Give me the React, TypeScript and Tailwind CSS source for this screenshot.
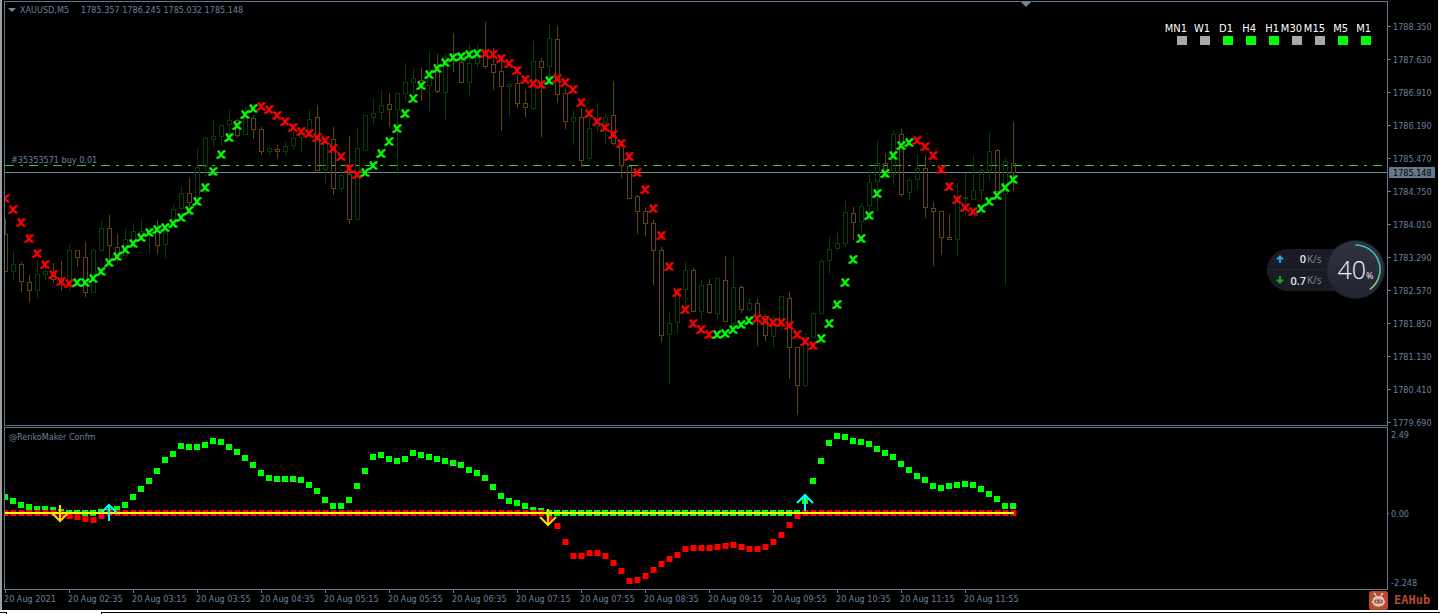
import clsx from "clsx";

type Candle = [up: number, high: number, top: number, bottom: number, low: number];

const STEP = 8;
const FIRST_X = 5;

// one row per bar: direction, high, body top, body bottom, low
const candles: Candle[] = [
  [0, 219, 234, 271, 271], [1, 251, 264, 271, 280], [0, 262, 264, 281, 291], [0, 275, 282, 290, 301],
  [1, 260, 274, 290, 297], [1, 267, 271, 274, 279], [0, 263, 272, 279, 282], [0, 261, 278, 281, 290],
  [1, 245, 250, 283, 290], [0, 250, 250, 257, 266], [0, 242, 257, 292, 296], [1, 248, 250, 292, 292],
  [1, 220, 228, 250, 251], [0, 215, 228, 245, 261], [0, 234, 247, 256, 261], [1, 229, 239, 255, 258],
  [1, 223, 231, 244, 245], [1, 219, 231, 236, 238], [1, 227, 230, 234, 253], [0, 220, 228, 245, 253],
  [1, 226, 228, 244, 257], [1, 205, 209, 227, 227], [1, 186, 193, 208, 209], [0, 178, 193, 202, 206],
  [1, 149, 167, 201, 205], [1, 137, 138, 166, 175], [1, 119, 136, 139, 147], [1, 124, 125, 136, 145],
  [1, 110, 120, 124, 131], [0, 119, 120, 135, 137], [1, 106, 115, 134, 134], [0, 115, 118, 129, 138],
  [0, 127, 129, 151, 154], [1, 145, 148, 151, 154], [0, 145, 149, 151, 158], [1, 142, 146, 151, 155],
  [1, 131, 138, 145, 149], [1, 130, 134, 137, 152], [1, 110, 119, 134, 137], [0, 105, 117, 170, 170],
  [1, 139, 140, 169, 182], [0, 127, 139, 188, 194], [1, 169, 175, 188, 191], [0, 136, 174, 219, 223],
  [1, 128, 148, 219, 219], [1, 115, 115, 150, 150], [1, 98, 113, 117, 124], [1, 90, 105, 112, 119],
  [0, 93, 104, 109, 126], [1, 93, 93, 109, 174], [1, 63, 82, 93, 100], [1, 69, 78, 82, 93],
  [0, 68, 80, 85, 100], [1, 51, 70, 85, 110], [0, 54, 68, 91, 92], [1, 54, 57, 92, 119],
  [0, 33, 58, 60, 71], [0, 57, 62, 82, 82], [1, 43, 63, 82, 96], [1, 44, 57, 63, 68],
  [0, 22, 52, 66, 68], [0, 48, 64, 72, 89], [0, 60, 71, 86, 130], [1, 83, 84, 86, 116],
  [0, 74, 83, 103, 107], [0, 89, 103, 107, 116], [1, 41, 61, 108, 109], [0, 58, 61, 67, 136],
  [1, 24, 38, 66, 76], [0, 26, 39, 94, 102], [0, 89, 93, 121, 128], [1, 110, 117, 121, 144],
  [0, 108, 117, 160, 166], [1, 107, 128, 158, 160], [1, 103, 120, 126, 132], [1, 114, 117, 122, 142],
  [0, 81, 115, 143, 144], [0, 143, 144, 165, 177], [0, 166, 166, 198, 198], [0, 195, 196, 211, 233],
  [0, 208, 211, 223, 235], [0, 220, 223, 250, 284], [0, 247, 250, 335, 341], [1, 312, 323, 334, 383],
  [1, 287, 292, 322, 333], [1, 262, 270, 289, 307], [0, 268, 270, 311, 311], [1, 279, 285, 311, 318],
  [0, 279, 284, 312, 313], [1, 278, 278, 313, 318], [0, 256, 280, 321, 321], [1, 257, 287, 323, 329],
  [0, 285, 287, 309, 312], [1, 298, 303, 309, 311], [0, 299, 303, 316, 345], [0, 314, 316, 335, 340],
  [1, 316, 318, 336, 347], [1, 296, 296, 326, 329], [0, 292, 298, 347, 378], [0, 347, 347, 385, 414],
  [1, 333, 337, 385, 386], [1, 311, 313, 337, 337], [1, 259, 261, 313, 313], [1, 237, 249, 260, 273],
  [1, 233, 243, 248, 251], [1, 201, 212, 243, 246], [0, 207, 213, 222, 239], [1, 203, 206, 221, 230],
  [1, 170, 182, 205, 215], [1, 140, 163, 181, 211], [0, 153, 163, 176, 177], [1, 130, 134, 174, 183],
  [0, 129, 134, 194, 196], [1, 178, 180, 192, 199], [1, 154, 168, 179, 189], [0, 155, 168, 207, 217],
  [0, 202, 208, 211, 265], [0, 211, 211, 237, 254], [0, 214, 237, 239, 239], [1, 183, 198, 239, 255],
  [1, 173, 197, 198, 216], [1, 155, 190, 199, 199], [1, 169, 170, 190, 199], [1, 133, 151, 170, 180],
  [0, 149, 150, 191, 191], [1, 158, 161, 194, 284], [0, 122, 163, 172, 190],
];

const trend = [
  198, 209, 222, 238, 253, 264, 274, 281, 283, 282, 282, 278, 271, 262, 256, 249, 243, 237, 232, 229,
  227, 223, 217, 210, 201, 187, 171, 154, 137, 125, 114, 108, 106, 109, 115, 121, 127, 131, 133, 137,
  140, 148, 156, 168, 174, 172, 165, 153, 141, 128, 113, 98, 85, 74, 68, 62, 57, 56, 54, 53,
  53, 54, 58, 63, 70, 79, 83, 84, 80, 78, 82, 89, 102, 113, 121, 127, 134, 143, 156, 172,
  189, 208, 235, 266, 292, 309, 323, 329, 334, 334, 333, 329, 324, 320, 318, 320, 322, 322, 325, 334,
  341, 345, 338, 323, 304, 282, 259, 238, 215, 193, 173, 155, 145, 142, 140, 146, 155, 169, 186, 199,
  207, 211, 208, 201, 195, 187, 179,
];

// bar ranges where the trend marker is red
const downRanges = [[0, 8], [32, 44], [60, 67], [69, 88], [94, 101], [114, 121]];

const ZERO = 513;
const flat = (n: number): number[] => Array(n).fill(ZERO);

const upper = [
  497, 501, 505, 507, 509, 509, 510, 512, ...flat(4), 512, 512, 509, 505, 497, 489, 481, 471,
  460, 454, 446, 447, 447, 445, 441, 442, 447, 452, 458, 465, 473, 478, 479, 479, 479, 480, 485, 491,
  500, 506, 506, 500, 486, 471, 457, 455, 459, 461, 459, 453, 455, 457, 459, 461, 463, 465, 470, 473,
  478, 487, 496, 501, 503, 506, 510, 511, ...flat(32), 501, 481, 461, 443, 436, 437, 441, 442,
  444, 449, 453, 457, 464, 470, 476, 480, 486, 488, 486, 485, 484, 485, 489, 494, 499, 506, 506,
];

const lower = [
  ...flat(7), 514, 516, 517, 519, 520, 516, ...flat(55), 518, 526, 542, 556, 556, 553, 553, 556,
  563, 571, 581, 580, 576, 570, 564, 559, 555, 549, 548, 548, 548, 547, 546, 545, 547, 549, 549, 547,
  542, 535, 525, 516, ...flat(27),
];

const signals = [
  { x: 60, tip: 521, up: false },
  { x: 109, tip: 505, up: true },
  { x: 548, tip: 525, up: false },
  { x: 805, tip: 495, up: true },
];

const prices = [
  "1788.350", "1787.630", "1786.910", "1786.190", "1785.470", "1784.750", "1784.010",
  "1783.290", "1782.570", "1781.850", "1781.130", "1780.410", "1779.690",
];

const times = [
  "20 Aug 2021", "20 Aug 02:35", "20 Aug 03:15", "20 Aug 03:55", "20 Aug 04:35", "20 Aug 05:15",
  "20 Aug 05:55", "20 Aug 06:35", "20 Aug 07:15", "20 Aug 07:55", "20 Aug 08:35", "20 Aug 09:15",
  "20 Aug 09:55", "20 Aug 10:35", "20 Aug 11:15", "20 Aug 11:55",
];

const timeframes = [
  { name: "MN1", on: false },
  { name: "W1", on: false },
  { name: "D1", on: true },
  { name: "H4", on: true },
  { name: "H1", on: true },
  { name: "M30", on: false },
  { name: "M15", on: false },
  { name: "M5", on: true },
  { name: "M1", on: true },
];

const barX = (i: number) => FIRST_X + i * STEP;

const PriceChart = () => (
  <svg className="block h-[423px] w-full" aria-hidden="true">
    <g transform="translate(-5 -2)">
      <g shapeRendering="crispEdges">
        <line x1="5" x2="100%" y1="165.5" y2="165.5" stroke="#32cd32" strokeDasharray="9 6 3 6" />
        <rect x="5" y="172" width="100%" height="1" fill="#778899" />
        {candles.map(([up, high, top, bottom, low], i) => (
          <g key={i} stroke={up ? "#004000" : "#5c4800"} fill="none">
            <line x1={barX(i) + 0.5} x2={barX(i) + 0.5} y1={high} y2={top} />
            <line x1={barX(i) + 0.5} x2={barX(i) + 0.5} y1={bottom} y2={low + 1} />
            <rect x={barX(i) - 1.5} y={top + 0.5} width="4" height={bottom - top} />
          </g>
        ))}
      </g>
      {trend.map((y, i) => (
        <path
          key={i}
          d="M-3 -4 L-1 -1 L1.5 2 L2.5 3 L4.5 3.2 M4.5 -3.3 L2.5 -3 L0 0 L-2 2.8 L-4.5 3.6 M-1.5 0 H1.5"
          transform={`translate(${barX(i)} ${y + 0.5})`}
          fill="none"
          stroke={downRanges.some(([a, b]) => i >= a && i <= b) ? "#ff0000" : "#00ff00"}
          strokeWidth="2.3"
        />
      ))}
      <path d="M1021 2h10l-5 5z" fill="#778899" />
    </g>
  </svg>
);

const ConfirmChart = () => (
  <svg className="block h-[161px] w-full" aria-hidden="true">
    <g transform="translate(-5 -428)">
      <g shapeRendering="crispEdges">
        {upper.map((y, i) => (
          <rect key={i} x={barX(i) - 3} y={y - 3} width="6" height="6" fill="#00ff00" />
        ))}
        {lower.map((y, i) => (
          <g key={i}>
            <rect x={barX(i) - 3} y={y - 3} width="7" height="6" fill="#800000" />
            <rect x={barX(i) - 2} y={y - 3} width="5" height="6" fill="#ff0000" />
            {/* the histogram keeps its green base while the red line is below zero */}
            {y > 517 && <rect x={barX(i) - 3} y="510" width="6" height="6" fill="#00ff00" />}
          </g>
        ))}
        <rect x="5" y="512" width="1009" height="2" fill="#ffff00" />
      </g>
      {signals.map(({ x, tip, up }) => (
        <path
          key={x}
          d={up ? "M-8 8 L0 0 L8 8 M0 0 V16" : "M-8 -8 L0 0 L8 -8 M0 0 V-16"}
          transform={`translate(${x} ${tip})`}
          fill="none"
          stroke={up ? "#00ffff" : "#ffd700"}
          strokeWidth="2"
        />
      ))}
    </g>
  </svg>
);

const TimeframePanel = () => (
  <ul className="absolute top-5 right-4 flex text-[11px] leading-[14px] text-white">
    {timeframes.map(({ name, on }) => (
      <li key={name} className="flex w-[23px] flex-col items-end">
        <span className="whitespace-nowrap">{name}</span>
        <span className={clsx("h-[9px] w-[10px]", on ? "bg-[#00ff00]" : "bg-[#a9a9a9]")} />
      </li>
    ))}
  </ul>
);

const NetworkWidget = () => (
  <div className="absolute top-[238px] right-[2px] flex items-center font-['Open_Sans',sans-serif]">
    <div className="-mr-4 h-[42px] w-[75px] rounded-l-full bg-[#191c25]">
      <div className="flex h-[21px] items-center border-b border-[#242833] pl-[9px] leading-none">
        <svg className="size-2 shrink-0" viewBox="0 0 8 8" fill="none" stroke="#2f9de0" strokeWidth="2">
          <path d="M4 8V1.5M1 4.5l3-3 3 3" />
        </svg>
        <span className="w-[22px] text-right text-[11px] font-semibold text-gray-200">0</span>
        <span className="pl-px text-[10px] text-[#858a94]">K/s</span>
      </div>
      <div className="flex h-[21px] items-center pl-[9px] leading-none">
        <svg className="size-2 shrink-0" viewBox="0 0 8 8" fill="none" stroke="#1fa02c" strokeWidth="2">
          <path d="M4 0v6.5M1 3.5l3 3 3-3" />
        </svg>
        <span className="w-[22px] text-right text-[11px] font-semibold text-gray-200">0.7</span>
        <span className="pl-px text-[10px] text-[#858a94]">K/s</span>
      </div>
    </div>
    <div className="relative flex size-[59px] items-center justify-center rounded-full border border-[#1a1d27] bg-linear-to-b from-[#303441] to-[#222530]">
      <svg className="absolute inset-0 size-full" viewBox="0 0 58 58" fill="none">
        <defs>
          <linearGradient id="load" x1="0" y1="0" x2="0" y2="1">
            <stop offset="0" stopColor="#2cc3c8" />
            <stop offset="0.6" stopColor="#4cc9a0" />
            <stop offset="1" stopColor="#9ad160" />
          </linearGradient>
        </defs>
        <path d="M29 4 A25 25 0 0 1 43.7 49.2" stroke="url(#load)" strokeWidth="1.6" />
      </svg>
      <p className="flex items-baseline leading-none text-gray-100">
        <span className="text-[25px] font-light">40</span>
        <span className="text-[9px]">%</span>
      </p>
    </div>
  </div>
);

const Logo = () => (
  <div className="flex w-[69px] shrink-0 items-center gap-[6px]">
    <svg className="size-[19px] shrink-0" viewBox="0 0 19 19" aria-hidden="true">
      <rect width="19" height="19" rx="2.500" fill="#b9482f" />
      <path d="M6 3l1.800 3M13 3l-1.800 3" stroke="#d0c8c5" strokeWidth="1.200" />
      <circle cx="5.800" cy="2.800" r="1.100" fill="#d0c8c5" />
      <circle cx="13.200" cy="2.800" r="1.100" fill="#d0c8c5" />
      <path d="M9.500 5c3.600 0 5.700 2 6 4.700 1.100.2 1.100 2.200 0 2.400-.8 2.200-3 3.600-6 3.600s-5.200-1.400-6-3.600c-1.100-.2-1.100-2.200 0-2.400.3-2.700 2.400-4.700 6-4.700z" fill="#d0c8c5" />
      <rect x="5" y="8.400" width="9" height="4.200" rx="2" fill="#b9482f" />
      <circle cx="7.500" cy="10.500" r="0.900" fill="#d0c8c5" />
      <circle cx="11.500" cy="10.500" r="0.900" fill="#d0c8c5" />
    </svg>
    <span className="font-['DejaVu_Sans_Mono',monospace] text-[12px] leading-none font-bold text-[#b9482f]">
      EAHub
    </span>
  </div>
);

const Tick = () => <span className="mr-[2px] h-px w-[3px] shrink-0 bg-[#708098]" />;

export default function App() {
  return (
    <div className="bg-white font-['DejaVu_Sans_Condensed','DejaVu_Sans',sans-serif] text-[9px] leading-3 text-[#6b80a0]">
      <main className="border-x-2 border-l-[#a0a0a0] border-r-white bg-black pt-px pl-[2px]">
        <section className="flex">
          <div className="relative min-w-0 flex-1 overflow-hidden border border-[#66788f]">
            <PriceChart />
            <h1 className="absolute top-[2px] left-[3px] flex items-center gap-1 whitespace-pre">
              <svg className="h-1 w-2" viewBox="0 0 8 4" aria-hidden="true">
                <path d="M0 0h8L4 4z" fill="#778899" />
              </svg>
              <span className="w-[57px]">XAUUSD,M5</span>
              <span>1785.357 1786.245 1785.032 1785.148</span>
            </h1>
            <p className="absolute top-[152px] left-[6px]">#35353571 buy 0.01</p>
            <TimeframePanel />
            <NetworkWidget />
          </div>
          <div className="relative h-[425px] w-[50px] shrink-0 pt-[9px]">
            {prices.map((price) => (
              <div key={price} className="flex h-[33px] items-center">
                <Tick />
                {price}
              </div>
            ))}
            <div className="absolute top-[166px] left-px flex h-[11px] w-[46px] items-center bg-[#66788f] pl-1 text-black">
              1785.148
            </div>
          </div>
        </section>

        <section className="mt-px flex">
          <div className="relative min-w-0 flex-1 overflow-hidden border border-[#66788f]">
            <ConfirmChart />
            <h2 className="absolute top-[3px] left-1">@RenkoMaker Confm</h2>
          </div>
          <div className="flex w-[50px] shrink-0 flex-col justify-between pt-[2px] pb-px">
            <div className="pl-[3px]">2.49</div>
            <div className="flex items-center pt-[9px]">
              <span className="mr-[2px] h-px w-px bg-[#708098]" />
              0.00
            </div>
            <div className="pl-[3px]">-2.248</div>
          </div>
        </section>

        <footer className="flex h-5 justify-between">
          <ol className="flex">
            {times.map((time) => (
              <li key={time} className="w-16 shrink-0 whitespace-nowrap">
                <span className="ml-px block h-[3px] w-px bg-[#66788f]" />
                {time}
              </li>
            ))}
          </ol>
          <Logo />
        </footer>
      </main>
      <div className="flex h-1 gap-[94px] pt-[2px]">
        <span className="h-[2px] w-[7px] border-t border-r border-black" />
        <span className="h-[2px] flex-1 border-t border-l border-black" />
      </div>
    </div>
  );
}
